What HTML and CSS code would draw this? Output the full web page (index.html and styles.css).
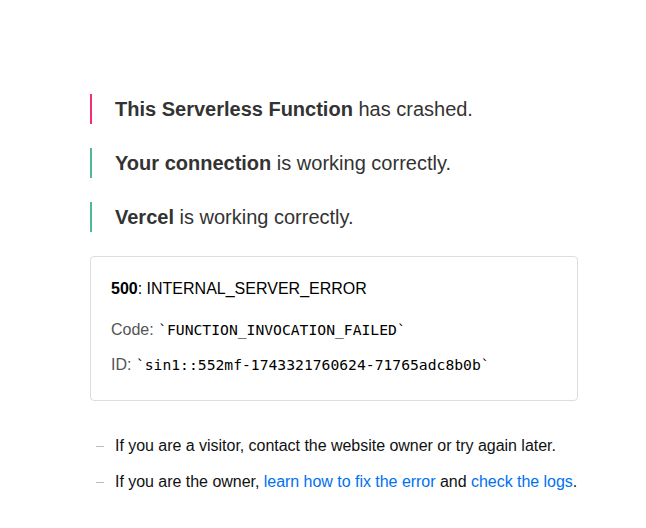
FILE: index.html
```html
<!DOCTYPE html>
<html>
<head>
<meta charset="utf-8">
<link rel="stylesheet" href="styles.css">
</head>
<body>
<main class="main">
  <p class="status status-error"><strong>This Serverless Function</strong> has crashed.</p>
  <p class="status status-ok"><strong>Your connection</strong> is working correctly.</p>
  <p class="status status-ok"><strong>Vercel</strong> is working correctly.</p>
  <section class="devinfo">
    <p class="devinfo-title"><strong>500</strong>: INTERNAL_SERVER_ERROR</p>
    <p class="devinfo-line">Code: <code class="mono">`FUNCTION_INVOCATION_FAILED`</code></p>
    <p class="devinfo-line">ID: <code class="mono">`sin1::552mf-1743321760624-71765adc8b0b`</code></p>
  </section>
  <ul class="notes">
    <li class="note">If you are a visitor, contact the website owner or try again later.</li>
    <li class="note">If you are the owner, <a class="link" href="#">learn how to fix the error</a> and <a class="link" href="#">check the logs</a>.</li>
  </ul>
</main>
</body>
</html>
```
FILE: styles.css
```css
html, body {
  margin: 0;
  padding: 0;
  background: #fff;
}
body {
  font-family: "Liberation Sans", Arial, sans-serif;
  color: #333;
}
.main {
  width: 488px;
  padding: 94px 0 0 90px;
}
.status {
  margin: 0 0 24px 0;
  border-left: 2px solid #50b897;
  padding-left: 23px;
  font-size: 20px;
  line-height: 30px;
  color: #333;
}
.status-error {
  border-left-color: #ec3072;
}
.devinfo {
  border: 1px solid #ddd;
  border-radius: 4px;
  padding: 20px 20px 26px 20px;
}
.devinfo-title {
  margin: 0;
  font-size: 16px;
  line-height: 24px;
  color: #000;
}
.devinfo-line {
  margin: 20px 0 0 0;
  font-size: 16px;
  line-height: 18px;
  color: #555;
}
.devinfo-line + .devinfo-line {
  margin-top: 17px;
}
.mono {
  font-family: "DejaVu Sans Mono", monospace;
  font-size: 14.7px;
  color: #000;
}
.notes {
  list-style: none;
  margin: 33px 0 0 0;
  padding: 0;
}
.note {
  position: relative;
  padding-left: 25px;
  font-size: 16px;
  line-height: 24px;
  margin-bottom: 12px;
  color: #111;
  white-space: nowrap;
  letter-spacing: -0.03px;
}
.note::before {
  content: "";
  position: absolute;
  left: 6px;
  top: 12px;
  width: 8px;
  height: 1px;
  background: #bbb;
}
.link {
  color: #0070f3;
  text-decoration: none;
}
```
